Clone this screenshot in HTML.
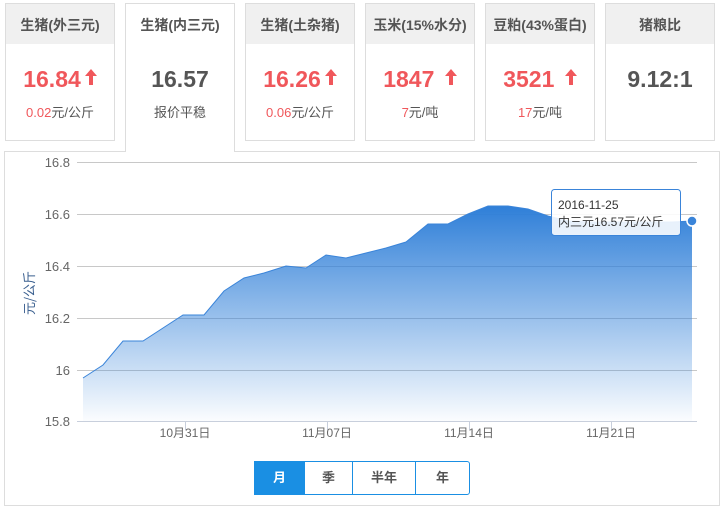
<!DOCTYPE html>
<html><head><meta charset="utf-8"><style>
body{margin:0;width:728px;height:514px;background:#fff;font-family:"Liberation Sans","Noto Sans CJK SC",sans-serif;position:relative;overflow:hidden}
.card{position:absolute;top:3px;width:108px;height:136px;border:1px solid #ddd;background:#fff;text-align:center}
.card .h{height:40px;background:#f0f0f0;line-height:42px;font-size:14px;color:#555;font-weight:bold}
.card.act{height:148px;border-bottom:none;z-index:2}
.card.act .h{background:#fff}
.v{margin-top:22px;font-size:23px;font-weight:bold;color:#f0575b;height:26px;line-height:26px}
.v.g{color:#555}
.s{margin-top:10px;font-size:13px;color:#555}
.s b{font-weight:normal;color:#f0575b}
.arr{display:inline-block;vertical-align:2px;margin-left:4px}
.panel{position:absolute;left:4px;top:151px;width:714px;height:353px;border:1px solid #ddd}
.btns{position:absolute;left:254px;top:461px;height:32px;border:1px solid #1a8fe3;display:flex;border-radius:0 3px 3px 0;font-size:13px;font-weight:bold;color:#555}
.btns div{line-height:32px;text-align:center;border-left:1px solid #1a8fe3}
</style></head><body>
<div class="card" style="left:5px"><div class="h">生猪(外三元)</div><div class="v">16.84<svg class="arr" width="12" height="16" viewBox="0 0 12 16"><path d="M6 0L12 7H8V16H4V7H0Z" fill="#f0575b"/></svg></div><div class="s"><b>0.02</b>元/公斤</div></div>
<div class="card act" style="left:125px"><div class="h">生猪(内三元)</div><div class="v g">16.57</div><div class="s">报价平稳</div></div>
<div class="card" style="left:245px"><div class="h">生猪(土杂猪)</div><div class="v">16.26<svg class="arr" width="12" height="16" viewBox="0 0 12 16"><path d="M6 0L12 7H8V16H4V7H0Z" fill="#f0575b"/></svg></div><div class="s"><b>0.06</b>元/公斤</div></div>
<div class="card" style="left:365px"><div class="h">玉米(15%水分)</div><div class="v">1847 <svg class="arr" width="12" height="16" viewBox="0 0 12 16"><path d="M6 0L12 7H8V16H4V7H0Z" fill="#f0575b"/></svg></div><div class="s"><b>7</b>元/吨</div></div>
<div class="card" style="left:485px"><div class="h">豆粕(43%蛋白)</div><div class="v">3521 <svg class="arr" width="12" height="16" viewBox="0 0 12 16"><path d="M6 0L12 7H8V16H4V7H0Z" fill="#f0575b"/></svg></div><div class="s"><b>17</b>元/吨</div></div>
<div class="card" style="left:605px"><div class="h">猪粮比</div><div class="v g">9.12:1</div></div>
<div class="panel"></div>
<svg style="position:absolute;left:0;top:0" width="728" height="514">
<defs><linearGradient id="gr" gradientUnits="userSpaceOnUse" x1="0" y1="206" x2="0" y2="421"><stop offset="0" stop-color="#2f7fd8"/><stop offset="1" stop-color="#2f7fd8" stop-opacity="0.02"/></linearGradient></defs>
<g stroke="#c8c8c8" stroke-width="1">
<line x1="77" y1="162.5" x2="697" y2="162.5"/><line x1="77" y1="214.5" x2="697" y2="214.5"/><line x1="77" y1="266.5" x2="697" y2="266.5"/><line x1="77" y1="318.5" x2="697" y2="318.5"/><line x1="77" y1="370.5" x2="697" y2="370.5"/>
</g>
<path d="M83,378 L103,365 L123,341 L143,341 L163,328 L183,315 L204,315 L224,291 L244,278 L264,273 L286,266 L306,268 L326,255 L346,258 L366,253 L386,248 L406,242 L428,224 L448,224 L468,214 L488,206 L508,206 L528,209 L548,216 L568,221 L590,222 L612,222 L632,222 L652,222 L672,222 L692,221 L692,421 L83,421Z" fill="url(#gr)"/>
<path d="M83,378 L103,365 L123,341 L143,341 L163,328 L183,315 L204,315 L224,291 L244,278 L264,273 L286,266 L306,268 L326,255 L346,258 L366,253 L386,248 L406,242 L428,224 L448,224 L468,214 L488,206 L508,206 L528,209 L548,216 L568,221 L590,222 L612,222 L632,222 L652,222 L672,222 L692,221" fill="none" stroke="#3a84d9" stroke-width="1"/>
<g stroke="#c8cfdc"><line x1="77" y1="421.5" x2="697" y2="421.5"/><line x1="185.5" y1="421" x2="185.5" y2="430"/><line x1="327.5" y1="421" x2="327.5" y2="430"/><line x1="469.5" y1="421" x2="469.5" y2="430"/><line x1="611.5" y1="421" x2="611.5" y2="430"/></g>
<g font-size="13" fill="#666" text-anchor="end" font-family="Liberation Sans,sans-serif">
<text x="70" y="167">16.8</text><text x="70" y="219">16.6</text><text x="70" y="271">16.4</text><text x="70" y="323">16.2</text><text x="70" y="375">16</text><text x="70" y="426">15.8</text></g>
<g font-size="12" fill="#666" text-anchor="middle" font-family="Liberation Sans,Noto Sans CJK SC,sans-serif">
<text x="185" y="437">10月31日</text><text x="327" y="437">11月07日</text><text x="469" y="437">11月14日</text><text x="611" y="437">11月21日</text></g>
<text transform="translate(34,293) rotate(-90)" text-anchor="middle" font-size="13" fill="#3a5f8f" font-family="Noto Sans CJK SC,sans-serif">元/公斤</text>
<rect x="551.5" y="189.5" width="129" height="46" rx="3" fill="#fff" fill-opacity="0.88" stroke="#3a84d9"/>
<g font-size="12" fill="#333" font-family="Liberation Sans,Noto Sans CJK SC,sans-serif"><text x="558" y="209">2016-11-25</text><text x="558" y="226">内三元16.57元/公斤</text></g>
<circle cx="692" cy="221" r="5" fill="#3a84d9" stroke="#fff" stroke-width="1.5"/>
</svg>
<div class="btns"><div style="width:49px;background:#1a8fe3;color:#fff;border-left:none">月</div><div style="width:47px">季</div><div style="width:62px">半年</div><div style="width:53px">年</div></div>
</body></html>
